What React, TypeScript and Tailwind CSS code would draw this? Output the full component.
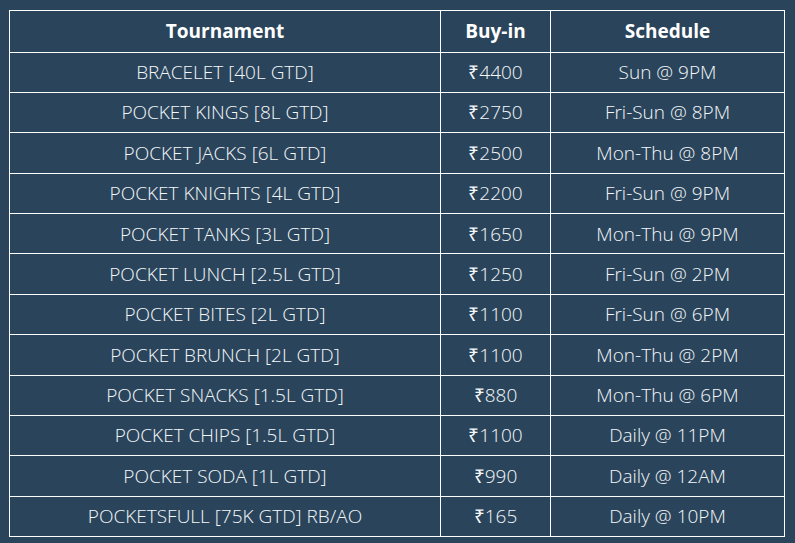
const rows: [string, string, string][] = [
  ["BRACELET [40L GTD]", "₹4400", "Sun @ 9PM"],
  ["POCKET KINGS [8L GTD]", "₹2750", "Fri-Sun @ 8PM"],
  ["POCKET JACKS [6L GTD]", "₹2500", "Mon-Thu @ 8PM"],
  ["POCKET KNIGHTS [4L GTD]", "₹2200", "Fri-Sun @ 9PM"],
  ["POCKET TANKS [3L GTD]", "₹1650", "Mon-Thu @ 9PM"],
  ["POCKET LUNCH [2.5L GTD]", "₹1250", "Fri-Sun @ 2PM"],
  ["POCKET BITES [2L GTD]", "₹1100", "Fri-Sun @ 6PM"],
  ["POCKET BRUNCH [2L GTD]", "₹1100", "Mon-Thu @ 2PM"],
  ["POCKET SNACKS [1.5L GTD]", "₹880", "Mon-Thu @ 6PM"],
  ["POCKET CHIPS [1.5L GTD]", "₹1100", "Daily @ 11PM"],
  ["POCKET SODA [1L GTD]", "₹990", "Daily @ 12AM"],
  ["POCKETSFULL [75K GTD] RB/AO", "₹165", "Daily @ 10PM"],
];

export default function App() {
  return (
    <div className="min-h-[543px] w-[795px] bg-[#2a455b] pl-[9px] pt-[10px] font-['Open_Sans',sans-serif] text-[#f4f7fa]">
      <table className="w-[775px] table-fixed border-collapse border border-white text-center">
        <colgroup>
          <col className="w-[431px]" />
          <col className="w-[110px]" />
          <col className="w-[234px]" />
        </colgroup>
        <thead>
          <tr className="h-[41.5px] text-[19px] font-bold text-white">
            <th className="border border-white">Tournament</th>
            <th className="border border-white">Buy-in</th>
            <th className="border border-white">Schedule</th>
          </tr>
        </thead>
        <tbody>
          {rows.map((r) => (
            <tr key={r[0]} className="h-[40.4px] text-[19px] font-light">
              <td className="border border-white">{r[0]}</td>
              <td className="border border-white">{r[1]}</td>
              <td className="border border-white">{r[2]}</td>
            </tr>
          ))}
        </tbody>
      </table>
    </div>
  );
}
